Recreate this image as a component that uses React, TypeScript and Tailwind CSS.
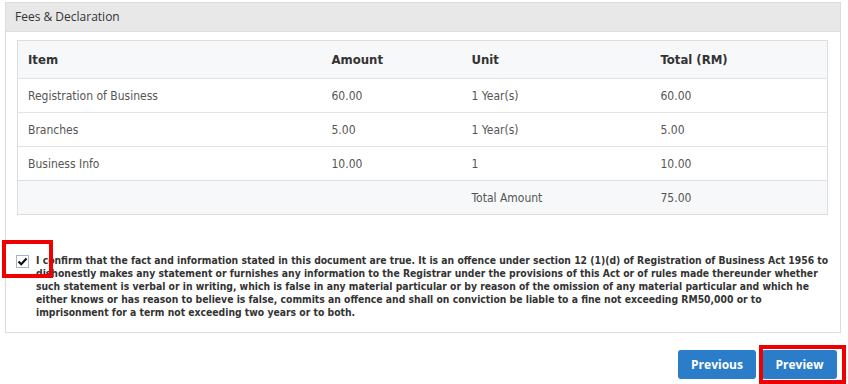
import React from "react";

const rows = [
  { item: "Registration of Business", amount: "60.00", unit: "1 Year(s)", total: "60.00" },
  { item: "Branches", amount: "5.00", unit: "1 Year(s)", total: "5.00" },
  { item: "Business Info", amount: "10.00", unit: "1", total: "10.00" },
];

const declaration = [
  "I confirm that the fact and information stated in this document are true. It is an offence under section 12 (1)(d) of Registration of Business Act 1956 to",
  "dishonestly makes any statement or furnishes any information to the Registrar under the provisions of this Act or of rules made thereunder whether",
  "such statement is verbal or in writing, which is false in any material particular or by reason of the omission of any material particular and which he",
  "either knows or has reason to believe is false, commits an offence and shall on conviction be liable to a fine not exceeding RM50,000 or to",
  "imprisonment for a term not exceeding two years or to both.",
];

const tahoma = { fontFamily: '"DejaVu Sans Condensed", "DejaVu Sans", sans-serif' };

const App = () => {
  return (
    <div className="relative w-[848px] h-[384px] overflow-hidden bg-white">
      <div className="pt-[2px] pl-[5px] pr-[7px]">
        {/* Panel */}
        <div className="border border-[#dcdcdc] bg-white">
          <div
            className="h-[29px] bg-[#e8e8e8] border-b border-[#dedede] pl-[9px] flex items-center text-[12px] text-[#333]"
            style={{ fontFamily: '"Open Sans", sans-serif' }}
          >
            Fees &amp; Declaration
          </div>

          <div className="pl-[11px] pr-[12px] pt-[8px] pb-[13px]">
            {/* Fee table */}
            <table
              className="w-[811px] border border-[#dddddd] border-collapse table-fixed text-[12px] text-[#555]"
              style={tahoma}
            >
              <colgroup>
                <col className="w-[304px]" />
                <col className="w-[140px]" />
                <col className="w-[189px]" />
                <col />
              </colgroup>
              <thead>
                <tr className="h-[38px] bg-[#f7f8fa] text-[#333] text-[13px] font-bold text-left">
                  <th className="pl-[10px] font-bold">Item</th>
                  <th className="pl-[10px] font-bold">Amount</th>
                  <th className="pl-[10px] font-bold">Unit</th>
                  <th className="pl-[10px] font-bold">Total (RM)</th>
                </tr>
              </thead>
              <tbody>
                {rows.map((r) => (
                  <tr key={r.item} className="h-[34px] border-t border-[#e3e3e3]">
                    <td className="pl-[10px]">{r.item}</td>
                    <td className="pl-[10px]">{r.amount}</td>
                    <td className="pl-[10px]">{r.unit}</td>
                    <td className="pl-[10px]">{r.total}</td>
                  </tr>
                ))}
                <tr className="h-[34px] border-t border-[#dddddd] bg-[#f7f8fa]">
                  <td />
                  <td />
                  <td className="pl-[10px]">Total Amount</td>
                  <td className="pl-[10px]">75.00</td>
                </tr>
              </tbody>
            </table>

            {/* Declaration */}
            <div className="flex items-start mt-[39px] -ml-[1px]">
              <span className="mt-[1px] w-[13px] h-[13px] shrink-0 border border-[#a7b4c2] bg-white flex items-center justify-center">
                <svg width="11" height="11" viewBox="0 0 11 11">
                  <path d="M1.5 5.5 L4.2 8.2 L9.5 2.5" fill="none" stroke="#111" strokeWidth="2.2" />
                </svg>
              </span>
              <div
                className="ml-[7px] text-[10.3px] leading-[13px] font-bold text-[#333] whitespace-nowrap"
                style={tahoma}
              >
                {declaration.map((line) => (
                  <div key={line}>{line}</div>
                ))}
              </div>
            </div>
          </div>
        </div>
      </div>

      {/* Buttons */}
      <div
        className="flex justify-end gap-[6px] pr-[11px] mt-[17px]"
        style={{ fontFamily: '"Open Sans", sans-serif' }}
      >
        <button className="w-[78px] h-[29px] rounded-[3px] bg-[#2b7dc9] text-white text-[12px] font-bold">
          Previous
        </button>
        <button className="w-[75px] h-[29px] rounded-[3px] bg-[#2b7dc9] text-white text-[12px] font-bold">
          Preview
        </button>
      </div>

      {/* Red annotation boxes */}
      <div className="absolute left-[2px] top-[240px] w-[51px] h-[38px] border-[4px] border-[#ee0000]" />
      <div className="absolute left-[759px] top-[345px] w-[87px] h-[39px] border-[4px] border-[#ee0000]" />
    </div>
  );
};

export default App;
